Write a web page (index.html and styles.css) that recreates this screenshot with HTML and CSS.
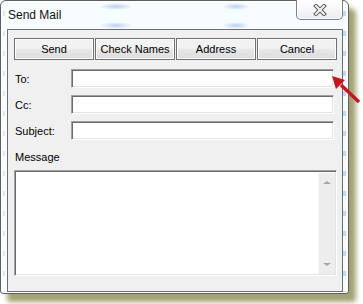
FILE: index.html
```html
<!DOCTYPE html>
<html lang="en">
<head>
    <meta charset="UTF-8">
    <title>Send Mail</title>
    <link rel="stylesheet" href="styles.css">
</head>
<body>
    <div class="stage">
        <div class="window">
            <div class="titlebar">
                <span class="title">Send Mail</span>
                <div class="close">
                    <svg width="14" height="12" viewBox="0 0 14 12">
                        <path d="M3 2 L11 10 M11 2 L3 10" stroke="#5c5c5c" stroke-width="4" stroke-linecap="square"/>
                        <path d="M3 2 L11 10 M11 2 L3 10" stroke="#f4f4f4" stroke-width="2" stroke-linecap="square"/>
                    </svg>
                </div>
            </div>
            <div class="client">
                <div class="actions">
                    <button class="btn">Send</button>
                    <button class="btn">Check Names</button>
                    <button class="btn">Address</button>
                    <button class="btn">Cancel</button>
                </div>
                <div class="fields">
                    <label>To:</label><div class="field"></div>
                    <label>Cc:</label><div class="field"></div>
                    <label>Subject:</label><div class="field"></div>
                </div>
                <div class="msg-label">Message</div>
                <div class="message">
                    <div class="msg-body"></div>
                    <div class="scrollbar">
                        <span class="arrow up"></span>
                        <span class="arrow down"></span>
                    </div>
                </div>
            </div>
        </div>
        <svg class="pointer" width="33" height="34" viewBox="0 0 33 34">
            <path d="M11 13 L29 30" stroke="#c4161c" stroke-width="3.4"/>
            <polygon points="2,4 6,17 15,8" fill="#c4161c"/>
        </svg>
    </div>
</body>
</html>
```

FILE: styles.css
```css
body { margin: 0; background: #fff; font-family: "Liberation Sans", Arial, sans-serif; font-size: 11px; color: #000; }
.stage { position: relative; width: 363px; height: 304px; }
.window { width: 336px; height: 288px; padding: 0 5px 4px 6px; border: 1px solid #5e5e5e; border-radius: 6px 6px 3px 3px; background-color: #f7fcff;
    background-image:
        repeating-linear-gradient(to bottom, transparent 0 10px, #c3d6f2 10px 15px, transparent 15px 20px),
        repeating-linear-gradient(to bottom, transparent 0 10px, #dde8f8 10px 15px, transparent 15px 20px),
        radial-gradient(closest-side, #bcd0f0, transparent),
        radial-gradient(closest-side, #bcd0f0, transparent),
        radial-gradient(closest-side, #bcd0f0, transparent),
        radial-gradient(closest-side, #bcd0f0, transparent),
        radial-gradient(closest-side, #c8d8f2, transparent),
        radial-gradient(closest-side, #c8d8f2, transparent);
    background-size: 3px 100%, 2px 100%, 34px 7px, 28px 7px, 34px 7px, 28px 7px, 26px 6px, 26px 6px;
    background-position: 342px 0, 2px 0, 98px 2px, 221px 2px, 98px 21px, 221px 21px, 98px 283px, 221px 283px;
    background-repeat: no-repeat;
    box-shadow: inset 0 0 0 1px rgba(255,255,255,0.9), 7px 8px 5px rgba(115,112,40,0.65); }
.titlebar { display: flex; justify-content: space-between; align-items: flex-start; height: 28px; }
.title { padding: 6px 0 0 1px; font-size: 12px; line-height: 16px; color: #111; }
.close { display: flex; align-items: center; justify-content: center; width: 45px; height: 19px; margin-top: -1px; border: 1px solid #808080; border-top: none; border-radius: 0 0 5px 5px; background: linear-gradient(#ffffff, #e9eef3); box-shadow: inset 0 0 0 1px rgba(255,255,255,0.8); }
.client { height: 246px; padding: 8px 5px 7px 6px; border: 1px solid #6e6e6e; background: #f0f0f0; }
.actions { display: grid; grid-template-columns: repeat(4, 1fr); gap: 1px; }
.btn { height: 22px; padding: 0; font-family: inherit; font-size: 11px; color: #000; border: 1px solid #707070; border-radius: 0; background: linear-gradient(#f2f2f2 45%, #e6e6e6 55%, #dddddd); box-shadow: inset 0 0 0 1px #fcfcfc; }
.fields { display: grid; grid-template-columns: 57px 1fr; row-gap: 7px; margin: 9px 3px 0 0; }
.fields label { display: flex; align-items: center; padding-left: 1px; }
.field { height: 17px; border: 1px solid; border-color: #a0a0a0 #fff #fff #a0a0a0; background: #fff; box-shadow: inset 1px 1px #6b6b6b, inset -1px -1px #e3e3e3; }
.msg-label { margin: 11px 0 0 1px; height: 19px; line-height: 13px; }
.message { display: flex; height: 104px; border: 1px solid; border-color: #a0a0a0 #fff #fff #a0a0a0; background: #fff; box-shadow: inset 1px 1px #6b6b6b, inset -1px -1px #e3e3e3; }
.msg-body { flex: 1; }
.scrollbar { display: flex; flex-direction: column; justify-content: space-between; align-items: center; width: 16px; margin: 2px 1px 1px 0; padding: 8px 0; background: #ededed; border-left: 1px solid #f6f6f6; }
.arrow { width: 0; height: 0; border-left: 4px solid transparent; border-right: 4px solid transparent; }
.arrow.up { border-bottom: 3px solid #a6a6a6; }
.arrow.down { border-top: 3px solid #a6a6a6; }
.pointer { position: absolute; left: 330px; top: 72px; }
```
